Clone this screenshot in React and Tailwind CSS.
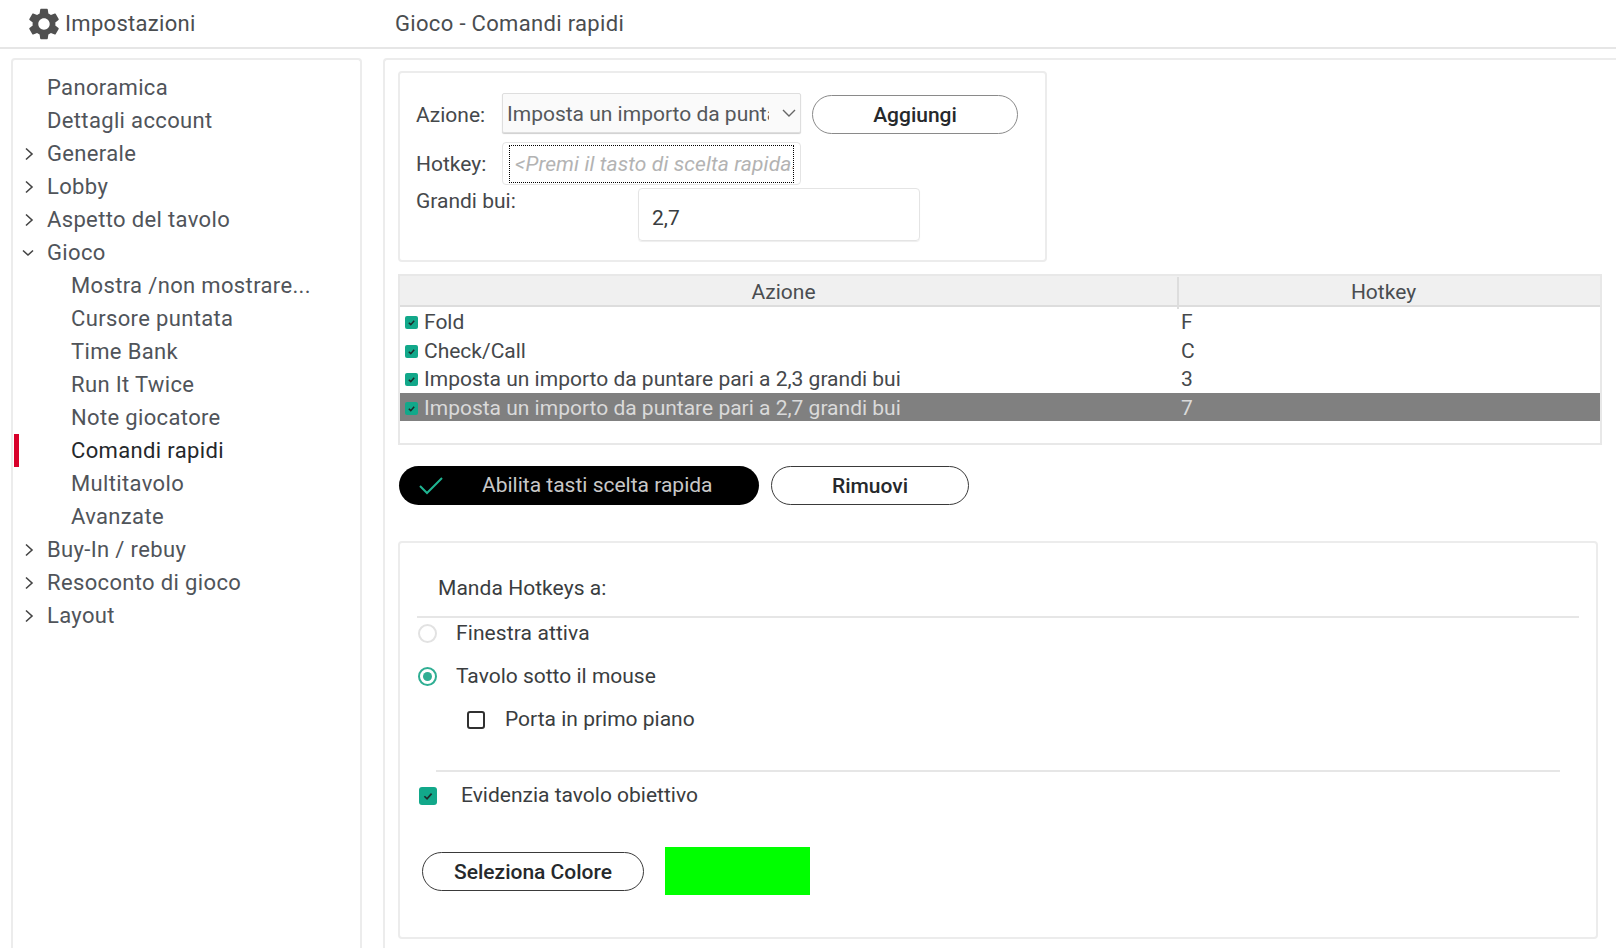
import React from 'react';
import { MdSettings } from 'react-icons/md';

const tree = [
  { label: 'Panoramica' },
  { label: 'Dettagli account' },
  { label: 'Generale', arrow: 'right' },
  { label: 'Lobby', arrow: 'right' },
  { label: 'Aspetto del tavolo', arrow: 'right' },
  { label: 'Gioco', arrow: 'down' },
  { label: 'Mostra /non mostrare...', child: true },
  { label: 'Cursore puntata', child: true },
  { label: 'Time Bank', child: true },
  { label: 'Run It Twice', child: true },
  { label: 'Note giocatore', child: true },
  { label: 'Comandi rapidi', child: true, active: true },
  { label: 'Multitavolo', child: true },
  { label: 'Avanzate', child: true },
  { label: 'Buy-In / rebuy', arrow: 'right' },
  { label: 'Resoconto di gioco', arrow: 'right' },
  { label: 'Layout', arrow: 'right' },
];

const rows = [
  { action: 'Fold', key: 'F' },
  { action: 'Check/Call', key: 'C' },
  { action: 'Imposta un importo da puntare pari a 2,3 grandi bui', key: '3' },
  { action: 'Imposta un importo da puntare pari a 2,7 grandi bui', key: '7', selected: true },
];

function Arrow({ dir }) {
  if (dir === 'down') {
    return (
      <svg width="14" height="10" viewBox="0 0 14 10" fill="none" stroke="#444" strokeWidth="1.6" className="-ml-[3px]">
        <path d="M2 2.5 L7 7 L12 2.5" />
      </svg>
    );
  }
  return (
    <svg width="10" height="14" viewBox="0 0 10 14" fill="none" stroke="#444" strokeWidth="1.6">
      <path d="M2 1.5 L8 7 L2 12.5" />
    </svg>
  );
}

function TreeRow({ item }) {
  return (
    <div className="flex h-[33px] items-center">
      <div className={`ml-px h-[33px] w-[5px] shrink-0 ${item.active ? 'bg-[#d8002a]' : ''}`}></div>
      <div className="flex w-[28px] shrink-0 items-center pl-[5px]">
        {item.arrow && <Arrow dir={item.arrow} />}
      </div>
      <span className={`text-[22px] tracking-[0.35px] whitespace-nowrap ${item.child ? 'pl-[24px]' : ''} ${item.active ? 'text-[#25282b]' : 'text-[#50545a]'}`}>
        {item.label}
      </span>
    </div>
  );
}

function SmallCheck() {
  return (
    <span className="flex h-[13px] w-[13px] shrink-0 items-center justify-center rounded-[2px] bg-[#12a88a]">
      <svg width="9" height="9" viewBox="0 0 10 10" fill="none" stroke="#1d2b2b" strokeWidth="1.7">
        <path d="M2 5.2 L4.2 7.4 L8 3" />
      </svg>
    </span>
  );
}

function PillButton({ className, children }) {
  return (
    <button className={`h-[39px] shrink-0 rounded-full border-[1.5px] border-[#3a3a3a] bg-white pt-[2px] text-[21px] font-medium text-[#26292c] ${className}`}>
      {children}
    </button>
  );
}

export default function App() {
  return (
    <div className="h-[948px] w-[1616px] overflow-hidden bg-white font-['Roboto',sans-serif] text-[21px] text-[#3a3d40]">
      {/* Header */}
      <div className="flex h-[49px] items-center border-b-2 border-[#e6e6e6]">
        <MdSettings size={38} className="ml-[25px] text-[#505050]" />
        <span className="ml-[2px] w-[330px] text-[22px] tracking-[0.3px] text-[#4a4d50]">Impostazioni</span>
        <span className="text-[22px] tracking-[0.33px] text-[#4a4d50]">Gioco - Comandi rapidi</span>
      </div>

      <div className="flex pt-[9px]">
        {/* Sidebar */}
        <div className="ml-[11px] h-[900px] w-[351px] shrink-0 rounded-t-[4px] border-2 border-b-0 border-[#ececec] pt-[11px]">
          {tree.map((item) => (
            <TreeRow key={item.label} item={item} />
          ))}
        </div>

        {/* Right panel */}
        <div className="ml-[21px] h-[900px] flex-1 rounded-tl-[4px] border-t-2 border-l-2 border-[#ececec] pl-[13px] pt-[11px]">
          {/* Add hotkey group */}
          <div className="h-[191px] w-[649px] rounded-[4px] border-2 border-[#ececec] pt-[20px]">
            <div className="flex">
              <span className="mt-[7px] w-[102px] pl-[16px] text-[#45484b]">Azione:</span>
              <div className="flex h-[40px] w-[299px] items-center rounded-[2px] border border-[#dedede] bg-[#fafafa] pl-[4px] shadow-[0_1px_1px_#cfcfcf]">
                <span className="w-[262px] overflow-hidden whitespace-nowrap pt-[3px] text-[#55585b]">Imposta un importo da puntare</span>
                <svg width="16" height="10" viewBox="0 0 16 10" fill="none" stroke="#666" strokeWidth="1.4" className="ml-[12px]">
                  <path d="M2 2 L8 8 L14 2" />
                </svg>
              </div>
              <PillButton className="ml-[11px] mt-[2px] w-[206px] border-[#8a8a8a]">Aggiungi</PillButton>
            </div>
            <div className="mt-[8px] flex">
              <span className="mt-[7px] w-[102px] pl-[16px] text-[#45484b]">Hotkey:</span>
              <div className="h-[43px] w-[299px] rounded-[4px] border border-[#e4e4e4]">
                <div className="mx-[6px] mt-[2px] h-[38px] overflow-hidden whitespace-nowrap border-[1.5px] border-dotted border-black pl-[5px] text-[21px] leading-[36px] tracking-[0.1px] italic text-[#b3b3b3]">
                  &lt;Premi il tasto di scelta rapida&gt;
                </div>
              </div>
            </div>
            <div className="mt-[3px] flex">
              <span className="-mt-[2px] w-[238px] pl-[16px] text-[#45484b]">Grandi bui:</span>
              <div className="flex h-[53px] w-[282px] items-center rounded-[4px] border border-[#e4e4e4] pl-[13px] pt-[8px] shadow-[0_1px_1px_#eeeeee]">2,7</div>
            </div>
          </div>

          {/* Hotkey table */}
          <div className="mt-[12px] h-[171px] w-[1204px] border-2 border-[#e8e8e8]">
            <div className="flex h-[31px] items-center border-b-2 border-[#dddddd] bg-[#f0f0f0] pt-[5px] text-[#4a4d50]">
              <span className="w-[779px] border-r-2 border-[#dddddd] pr-[10px] text-center">Azione</span>
              <span className="flex-1 pr-[12px] text-center">Hotkey</span>
            </div>
            {rows.map((row) => (
              <div
                key={row.key}
                className={`flex h-[28.5px] items-center pt-[3px] ${row.selected ? 'bg-[#808080] text-[#dadada]' : 'text-[#45484b]'}`}
              >
                <div className="flex w-[781px] items-center gap-[6px] pl-[5px]">
                  <SmallCheck />
                  <span className="whitespace-nowrap">{row.action}</span>
                </div>
                <span>{row.key}</span>
              </div>
            ))}
          </div>

          {/* Actions */}
          <div className="ml-px mt-[21px] flex gap-[12px]">
            <div className="flex h-[39px] w-[360px] items-center rounded-full bg-black pl-[20px] text-[#c8c8c8]">
              <svg width="24" height="18" viewBox="0 0 24 18" fill="none" stroke="#1fb592" strokeWidth="2">
                <path d="M1 9 L8 16 L23 1" />
              </svg>
              <span className="ml-[39px]">Abilita tasti scelta rapida</span>
            </div>
            <PillButton className="w-[198px]">Rimuovi</PillButton>
          </div>

          {/* Send hotkeys group */}
          <div className="mt-[36px] h-[398px] w-[1200px] rounded-[4px] border-2 border-[#ececec] pl-[17px]">
            <div className="ml-[21px] flex h-[73px] items-end pb-[12px] tracking-[0.05px]">Manda Hotkeys a:</div>
            <div className="mr-[17px] h-[2px] bg-[#e6e6e6]"></div>
            <div className="mt-[2px] flex h-[27px] items-center">
              <span className="ml-px h-[19px] w-[19px] rounded-full border-2 border-[#e2e2e2]"></span>
              <span className="ml-[19px] tracking-[0.1px]">Finestra attiva</span>
            </div>
            <div className="mt-[16px] flex h-[27px] items-center">
              <span className="ml-px flex h-[19px] w-[19px] items-center justify-center rounded-full border-2 border-[#2fae93]">
                <span className="h-[9px] w-[9px] rounded-full bg-[#2fae93]"></span>
              </span>
              <span className="ml-[19px]">Tavolo sotto il mouse</span>
            </div>
            <div className="mt-[16px] flex h-[27px] items-center">
              <span className="ml-[50px] h-[18px] w-[18px] rounded-[3px] border-2 border-[#303030]"></span>
              <span className="ml-[20px]">Porta in primo piano</span>
            </div>
            <div className="ml-[19px] mr-[36px] mt-[37px] h-[2px] bg-[#e6e6e6]"></div>
            <div className="mt-[10px] flex h-[27px] items-center">
              <span className="ml-[2px] flex h-[18px] w-[18px] items-center justify-center rounded-[3px] bg-[#12a88a]">
                <svg width="12" height="12" viewBox="0 0 10 10" fill="none" stroke="#1d2b2b" strokeWidth="1.4">
                  <path d="M2 5.2 L4.2 7.4 L8 3" />
                </svg>
              </span>
              <span className="ml-[24px]">Evidenzia tavolo obiettivo</span>
            </div>
            <div className="ml-[5px] mt-[38px] flex items-center gap-[21px]">
              <PillButton className="mt-px w-[222px]">Seleziona Colore</PillButton>
              <div className="h-[48px] w-[145px] bg-[#00ff00]"></div>
            </div>
          </div>
        </div>
      </div>
    </div>
  );
}
